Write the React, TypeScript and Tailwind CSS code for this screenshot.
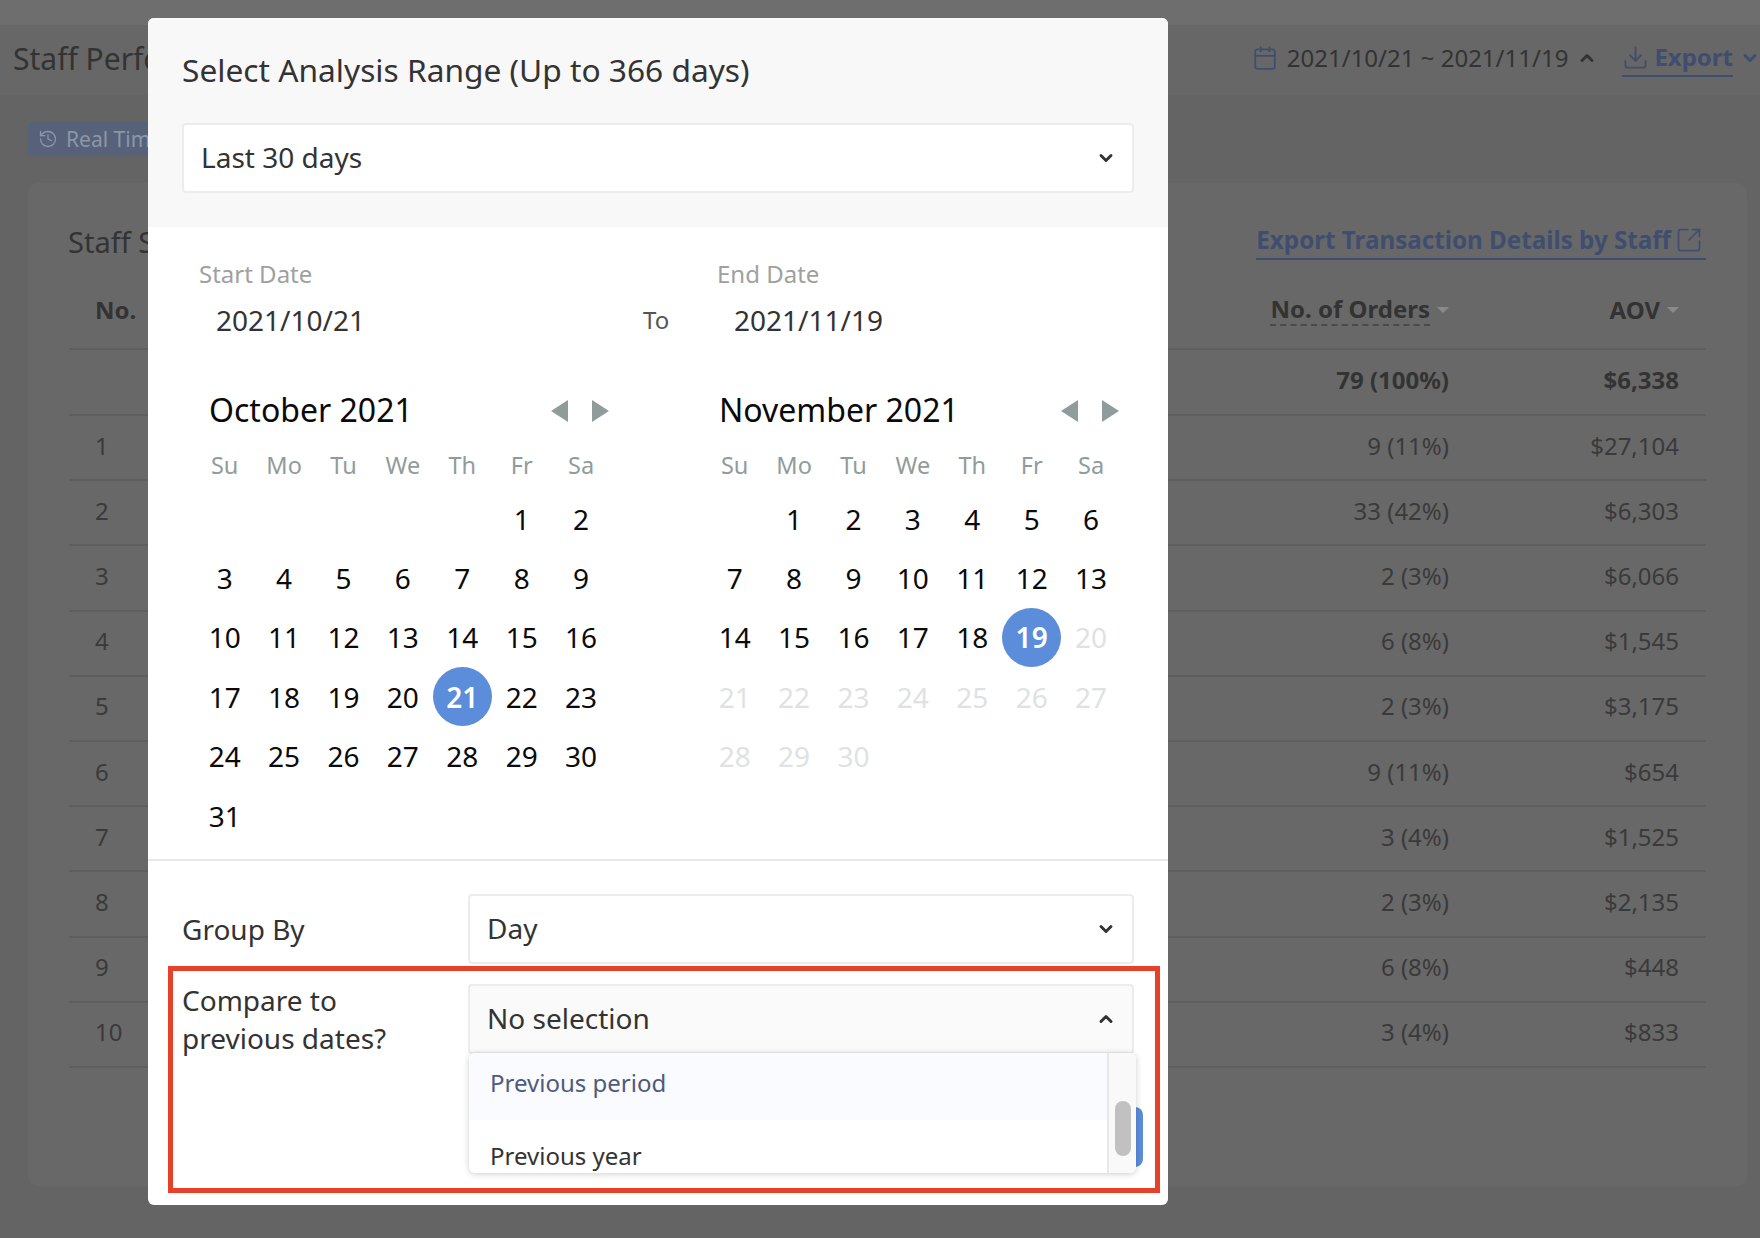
import { Calendar, ChevronDown, ChevronUp, Download, History, SquareArrowOutUpRight } from "lucide-react";

const rows = [
  ["1", "9 (11%)", "$27,104"],
  ["2", "33 (42%)", "$6,303"],
  ["3", "2 (3%)", "$6,066"],
  ["4", "6 (8%)", "$1,545"],
  ["5", "2 (3%)", "$3,175"],
  ["6", "9 (11%)", "$654"],
  ["7", "3 (4%)", "$1,525"],
  ["8", "2 (3%)", "$2,135"],
  ["9", "6 (8%)", "$448"],
  ["10", "3 (4%)", "$833"],
];

const weekdays = ["Su", "Mo", "Tu", "We", "Th", "Fr", "Sa"];

function Caret() {
  return <span className="ml-[7px] inline-block border-x-[6px] border-t-[6px] border-x-transparent border-t-[#8a8a8a]" />;
}

function Select({ label, open }: { label: string; open?: boolean }) {
  return (
    <div
      className={`flex h-[70px] items-center justify-between rounded-[4px] border-2 border-[#ececec] pl-[17px] pr-[16px] text-[28px] text-[#333] ${
        open ? "bg-[#fafafa]" : "bg-white"
      }`}
    >
      <span className="mb-[3px]">{label}</span>
      {open ? <ChevronUp size={20} strokeWidth={3.5} className="mb-[1px]" /> : <ChevronDown size={20} strokeWidth={3.5} className="mb-[1px]" />}
    </div>
  );
}

function Month({ title, blanks, total, selected, lastActive }: { title: string; blanks: number; total: number; selected: number; lastActive: number }) {
  return (
    <div className="w-[415px]">
      <div className="flex h-[40px] items-center justify-between pl-[14px] pr-[1px]">
        <span className="mt-[2px] text-[32px] text-[#0a0a0a]">{title}</span>
        <div className="mt-[4px] flex gap-[24px]">
          <span className="border-y-[11px] border-r-[17px] border-y-transparent border-r-[#909c9c]" />
          <span className="border-y-[11px] border-l-[17px] border-y-transparent border-l-[#909c9c]" />
        </div>
      </div>
      <div className="mt-[19px] grid h-[30px] grid-cols-[repeat(7,59.4px)] items-center text-center text-[23.5px] text-[#909c9c]">
        {weekdays.map((d) => (
          <span key={d}>{d}</span>
        ))}
      </div>
      <div className="mt-[11px] grid grid-cols-[repeat(7,59.4px)] auto-rows-[59.4px] text-[28px]">
        {Array.from({ length: blanks }).map((_, i) => (
          <span key={i} />
        ))}
        {Array.from({ length: total }).map((_, i) => {
          const day = i + 1;
          if (day === selected) {
            return (
              <span key={day} className="flex items-center justify-center">
                <span className="flex h-[59px] w-[59px] items-center justify-center rounded-full bg-[#5b8ddb] font-semibold text-white">{day}</span>
              </span>
            );
          }
          return (
            <span key={day} className={`flex items-center justify-center ${day > lastActive ? "text-[#dfe2e2]" : "text-[#0a0a0a]"}`}>
              {day}
            </span>
          );
        })}
      </div>
    </div>
  );
}

export default function App() {
  return (
    <div className="relative h-[1238px] w-[1760px] overflow-hidden bg-[#646464] text-[#333]" style={{ fontFamily: '"Noto Sans", "Open Sans", sans-serif' }}>
      {/* Page behind the dimmed overlay */}
      <div className="h-[25px] bg-[#6e6e6e]" />
      <div className="flex h-[70px] items-center justify-between bg-[#676767] pb-[4px] pl-[13px]">
        <h1 className="w-[135px] overflow-hidden whitespace-nowrap text-[30px] text-[#333]">Staff Performance</h1>
        <div className="flex items-center">
          <Calendar size={26} strokeWidth={1.6} className="text-[#3f4e70]" />
          <span className="ml-[9px] text-[24px] text-[#333]">2021/10/21 ~ 2021/11/19</span>
          <ChevronUp size={20} strokeWidth={3.5} className="ml-[9px] text-[#333]" />
          <div className="ml-[25px] flex h-[38px] items-center border-b-2 border-[#3f4e70] text-[#3f4e70]">
            <Download size={27} strokeWidth={1.6} />
            <span className="ml-[5px] text-[24px] font-bold">Export</span>
          </div>
          <ChevronDown size={20} strokeWidth={3.5} className="ml-[7px] text-[#3f4e70]" />
        </div>
      </div>

      <div className="px-[28px] pt-[27px]">
        <div className="flex h-[34px] w-[160px] items-center gap-[8px] rounded-[5px] bg-[#56627a] pl-[10px] text-[21px] text-[#8d96a8]">
          <History size={20} strokeWidth={1.6} />
          <span className="mt-[2px]">Real Time</span>
        </div>

        <div className="mt-[27px] h-[1003px] w-[1719px] rounded-[10px] bg-[#686868] px-[41px]">
          <div className="flex h-[77px] items-end justify-between">
            <h2 className="-mb-[3px] -ml-[1px] text-[29px] text-[#333]">Staff Sales</h2>
            <div className="flex items-center gap-[4px] border-b-2 border-[#3f4e70] pr-[3px] text-[24.2px] font-bold text-[#3f4e70]">
              Export Transaction Details by Staff
              <SquareArrowOutUpRight size={28} strokeWidth={1.5} />
            </div>
          </div>

          <div className="flex h-[90px] items-center border-b-2 border-[#5e5e5e] pl-[26px] pr-[27px] pt-[11px] text-[24px] font-bold text-[#333]">
            <span className="flex-1">No.</span>
            <span className="flex items-center">
              <span className="border-b-2 border-dashed border-[#4a4a4a] leading-[30px]">No. of Orders</span>
              <Caret />
            </span>
            <span className="flex w-[230px] items-center justify-end">
              AOV
              <Caret />
            </span>
          </div>

          <div className="flex h-[66px] items-center border-b-2 border-[#5e5e5e] pb-[4px] pl-[26px] pr-[27px] text-[24px] font-bold text-[#333]">
            <span className="flex-1" />
            <span>79 (100%)</span>
            <span className="w-[230px] text-right">$6,338</span>
          </div>

          {rows.map(([no, orders, aov]) => (
            <div key={no} className="flex h-[65.2px] items-center border-b-2 border-[#5e5e5e] pb-[4px] pl-[26px] pr-[27px] text-[24px] text-[#3a3a3a]">
              <span className="flex-1">{no}</span>
              <span>{orders}</span>
              <span className="w-[230px] text-right">{aov}</span>
            </div>
          ))}
        </div>
      </div>

      {/* Modal */}
      <div className="absolute left-[148px] top-[18px] h-[1187px] w-[1020px] overflow-hidden rounded-[6px] bg-white">
        <div className="h-[209px] bg-[#f8f8f8] px-[34px] pt-[33px]">
          <h3 className="h-[38px] text-[31.7px] leading-[38px] text-[#333]">Select Analysis Range (Up to 366 days)</h3>
          <div className="mt-[34px] w-[952px]">
            <Select label="Last 30 days" />
          </div>
        </div>

        <div className="h-[634px] border-b-2 border-[#e8e8e8] pt-[32px]">
          <div className="flex pl-[51px]">
            <div className="w-[444px]">
              <div className="h-[30px] text-[24px] leading-[30px] text-[#a0a0a0]">Start Date</div>
              <div className="mt-[11px] flex h-[40px] items-center pl-[17px] text-[28px] text-[#333]">2021/10/21</div>
            </div>
            <div className="flex h-[81px] w-[74px] items-end text-[24px] leading-[40px] text-[#555]">To</div>
            <div>
              <div className="h-[30px] text-[24px] leading-[30px] text-[#a0a0a0]">End Date</div>
              <div className="mt-[11px] flex h-[40px] items-center pl-[17px] text-[28px] text-[#333]">2021/11/19</div>
            </div>
          </div>
          <div className="mt-[49px] flex gap-[95px] pl-[47px]">
            <Month title="October 2021" blanks={5} total={31} selected={21} lastActive={31} />
            <Month title="November 2021" blanks={1} total={30} selected={19} lastActive={19} />
          </div>
        </div>

        <div className="px-[34px] pt-[33px]">
          <div className="flex items-center">
            <span className="w-[286px] text-[28px]">Group By</span>
            <div className="flex-1">
              <Select label="Day" />
            </div>
          </div>
          <div className="mt-[20px] flex">
            <span className="-mt-[3px] w-[286px] text-[28px] leading-[38px]">
              Compare to
              <br />
              previous dates?
            </span>
            <div className="relative flex-1">
              <Select label="No selection" open />
              <div className="absolute right-[-9px] top-[123px] h-[60px] w-[120px] rounded-[8px] bg-[#5b8ddb]" />
              <div className="absolute left-[1px] right-[-2px] top-[69px] z-10 flex h-[120px] overflow-hidden rounded-[6px] bg-white shadow-[0_1px_6px_rgba(0,0,0,0.2)]">
                <div className="flex-1 text-[24px]">
                  <div className="flex h-[67px] items-start bg-[#fafbfe] pl-[21px] pt-[12px] text-[#4f5a7c]">Previous period</div>
                  <div className="pl-[21px] pt-[18px] text-[#333]">Previous year</div>
                </div>
                <div className="w-[29px] border-l-2 border-[#e8e8e8] bg-[#f9f9f9] pl-[6px] pt-[48px]">
                  <div className="h-[55px] w-[16px] rounded-full bg-[#c1c1c1]" />
                </div>
              </div>
            </div>
          </div>
        </div>

        {/* Annotation */}
        <div className="pointer-events-none absolute left-[20px] top-[948px] z-20 h-[227px] w-[992px] border-[5px] border-[#e8412a]" />
      </div>
    </div>
  );
}
